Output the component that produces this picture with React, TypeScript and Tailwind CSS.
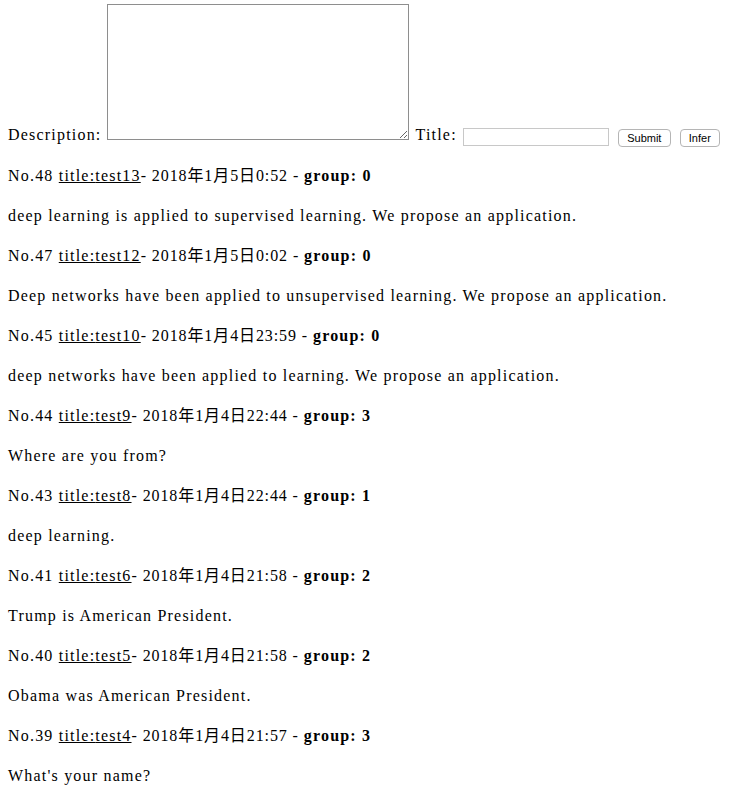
import React from "react";

const entries = [
  { no: 48, title: "test13", date: "2018年1月5日0:52", group: 0, text: "deep learning is applied to supervised learning. We propose an application." },
  { no: 47, title: "test12", date: "2018年1月5日0:02", group: 0, text: "Deep networks have been applied to unsupervised learning. We propose an application." },
  { no: 45, title: "test10", date: "2018年1月4日23:59", group: 0, text: "deep networks have been applied to learning. We propose an application." },
  { no: 44, title: "test9", date: "2018年1月4日22:44", group: 3, text: "Where are you from?" },
  { no: 43, title: "test8", date: "2018年1月4日22:44", group: 1, text: "deep learning." },
  { no: 41, title: "test6", date: "2018年1月4日21:58", group: 2, text: "Trump is American President." },
  { no: 40, title: "test5", date: "2018年1月4日21:58", group: 2, text: "Obama was American President." },
  { no: 39, title: "test4", date: "2018年1月4日21:57", group: 3, text: "What's your name?" },
];

export default function App() {
  return (
    <div className="bg-white text-black px-2 text-[16px] leading-[24px] min-h-[804px] font-['Liberation_Serif','Noto_Sans_CJK_JP',serif] tracking-[1.2px]">
      <div className="flex items-end pt-[4px] pb-[1px] h-[148px]">
        <span className="leading-[18px] mb-[3px]">Description:</span>
        <textarea className="ml-[5px] mb-[7px] w-[302px] h-[136px] border border-[#8e8e8e] resize-y bg-white" />
        <span className="ml-[7px] leading-[18px] mb-[3px]">Title:</span>
        <input className="ml-[6px] mb-[1px] w-[146px] h-[18px] border border-[#c8c8c8]" />
        <button className="ml-[9px] h-[18px] w-[53px] border border-[#b5b5b5] rounded-[4px] bg-white text-[11px] leading-[16px] tracking-normal font-['Liberation_Sans',Arial,sans-serif]">Submit</button>
        <button className="ml-[9px] h-[18px] w-[40px] border border-[#b5b5b5] rounded-[4px] bg-white text-[11px] leading-[16px] tracking-normal font-['Liberation_Sans',Arial,sans-serif]">Infer</button>
      </div>
      {entries.map((e) => (
        <div key={e.no}>
          <p className="mt-[16px]">
            No.{e.no} <a className="underline">title:{e.title}</a><span className="tracking-[0.9px]">- {e.date} - </span><b>group: {e.group}</b>
          </p>
          <p className="mt-[16px]">{e.text}</p>
        </div>
      ))}
    </div>
  );
}
